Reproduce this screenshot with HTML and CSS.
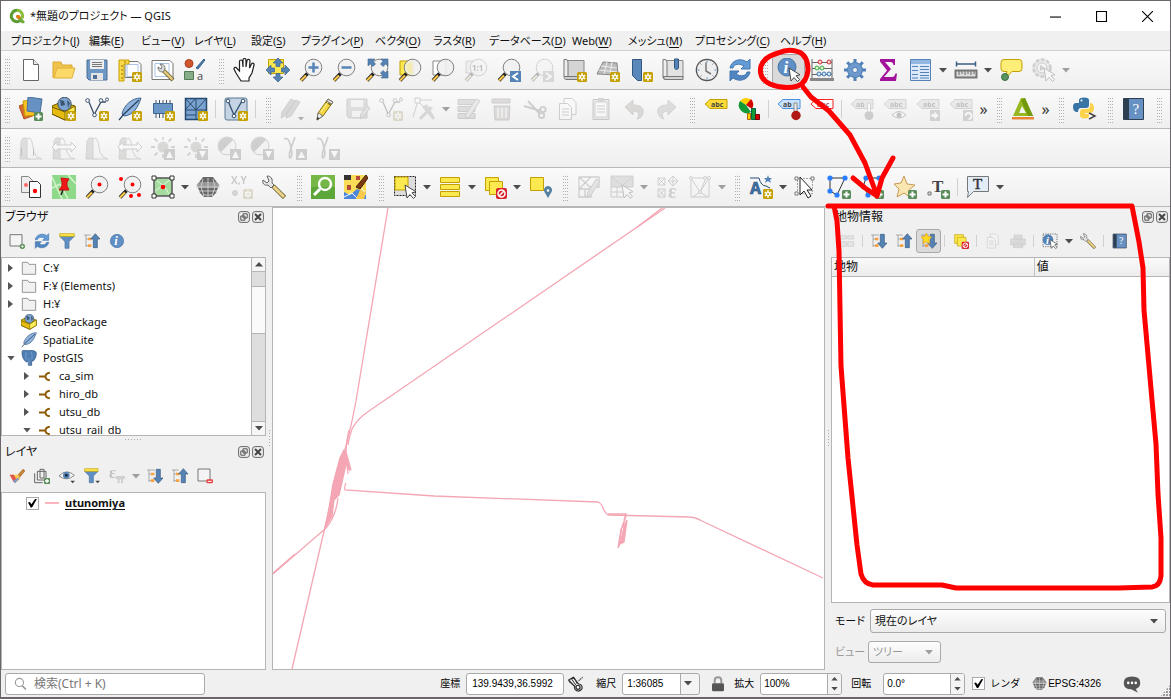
FILE: index.html
```html
<!DOCTYPE html>
<html lang="ja">
<head>
<meta charset="utf-8">
<title>*無題のプロジェクト — QGIS</title>
<link rel="stylesheet" href="styles.css">
</head>
<body>
<svg class="defs" aria-hidden="true">
<defs>
<g id="p-new"><rect x="14" y="14" width="10" height="10" rx="1.5" fill="#c4a000"/><path d="M19 15.3v7.4M15.8 17.2l6.4 3.6M22.2 17.2l-6.4 3.6" stroke="#fff" stroke-width="1.6"/><circle cx="19" cy="19" r="1" fill="#c4a000"/></g>
<g id="p-add"><rect x="15" y="15" width="9" height="9" rx="1.5" fill="#5a8c5a"/><path d="M19.500 16.500v6M16.500 19.500h6" stroke="#fff" stroke-width="2"/></g>
<g id="p-lens"><path d="M8.500 15.500l-6.500 7" stroke="#222" stroke-width="3.600"/><path d="M7 17.500l-5 5" stroke="#fcc94a" stroke-width="2.200"/><circle cx="14.500" cy="9.500" r="8.300" fill="#f0f0f0" fill-opacity=".88" stroke="#7e7e7e"/></g>
<g id="p-cursor"><path d="M12 10l2 13 3-3.500 3.500 4 2-2-3.500-3.700 4-1z" fill="#fff" stroke="#444"/></g>
<g id="p-hist"><path d="M1 23l1-18 2-3h4l4 7v14z" fill="#9fb096" stroke="#888"/><path d="M8 23V3l3-1 2 4 2 10 3 5 5 2z" fill="#f4f4f4" stroke="#888"/></g>
<g id="p-globe"><path d="M3 8h18M1 12h22M3 16h18M7 20h10M12 3v19M7 4l-2 8 3 9M17 4l2 8-3 9" stroke="#ddd" fill="none" stroke-width=".8"/></g>
<g id="p-tag"><path d="M1 7l5-4.500h17v9H6z"/></g>
</defs>
<symbol id="logo" viewBox="0 0 24 24"><path d="M12 3.500a8.500 8.500 0 1 0 6 14.500" fill="none" stroke="#5a9b34" stroke-width="4.500"/><path d="M12 3.500a8.500 8.500 0 0 1 7.600 12" fill="none" stroke="#8cbc3c" stroke-width="4.500"/><path d="M11 11h4l8 9v3h-4l-8-9z" fill="#6faa35"/><path d="M11 11h5l2 3-4 3-3-3z" fill="#ee7913"/></symbol>
<symbol id="newdoc" viewBox="0 0 24 24"><path d="M4.500 1.500h10l5 5v16h-15z" fill="#fff" stroke="#666"/><path d="M14.500 1.500v5h5" fill="#eee" stroke="#666"/></symbol>
<symbol id="open" viewBox="0 0 24 24"><path d="M1 20V4h8l1 3h10v4" fill="#f0c44c" stroke="#d9a72d"/><path d="M2 20l3-10h18l-3 10z" fill="#fcd867" stroke="#dfb13a"/></symbol>
<symbol id="save" viewBox="0 0 24 24"><path d="M2 2h20v20H4l-2-2z" fill="#6d97c4" stroke="#4d6f94"/><path d="M5 2h14v9H5z" fill="#eee"/><path d="M7 4.500h10M7 6.500h10M7 8.500h10" stroke="#777"/><path d="M6 15h12v7H6z" fill="#e4e4e4"/><path d="M8 17h4v4H8z" fill="#4d6f94"/></symbol>
<symbol id="layout" viewBox="0 0 24 24"><path d="M7 3.500h13l3 3v13H7z" fill="#fff" stroke="#777"/><path d="M9 6.500h11v12H9z" fill="none" stroke="#a9c4e6"/><path d="M1 2h10v4H6v17H1z" fill="#fcd94a" stroke="#c4a000"/><path d="M3 8h2M3 12h2M3 16h2M3 20h2M7 3v2" stroke="#8a7000"/><use href="#p-new"/></symbol>
<symbol id="layouts" viewBox="0 0 24 24"><path d="M1 2.500h18l3 3v16H1z" fill="#fff" stroke="#777"/><path d="M4 5.500h14v13H4z" fill="none" stroke="#a9c4e6"/><path d="M13 13l9 9" stroke="#665c30" stroke-width="4"/><path d="M13 13l8.500 8.500" stroke="#e2c878" stroke-width="2.500"/><path d="M9 6c3 0 5 1 5 5l-2 3c-4 0-5-2-5-5l3 2 1-2z" fill="#ddd" stroke="#777"/></symbol>
<symbol id="style" viewBox="0 0 24 24"><circle cx="5" cy="5.500" r="4" fill="#d0562e" stroke="#a84020"/><path d="M12 10l8-9 1 1-7 9z" fill="#4a78ac" stroke="#3c6490"/><path d="M.5 13.500h9v8h-9z" fill="#86ad86" stroke="#557a55"/><text x="13" y="22" font-family="Open Sans,sans-serif" font-size="11" fill="#444">a</text></symbol>
<symbol id="hand" viewBox="0 0 24 24"><path d="M8 23l-5-8-2-4c0-2 2-2 3-.5L6.500 13V3.500c0-2 2.800-2 3 0L10 9V2c0-2 3-2 3 0v7l1-6.500c.5-1.700 3-1.300 3 .500L16.500 10l2-4c1-1.500 3-.5 2.500 1l-2 8-3 5v3z" fill="#fff" stroke="#222" stroke-width="1.200"/></symbol>
<symbol id="panto" viewBox="0 0 24 24"><path d="M2.500 1.500h15v14h-15z" fill="#fce94f" stroke="#c4a000"/><path d="M12 0l5 5h-3v3.500h-4V5H7zM12 24l5-5h-3v-3.500h-4V19H7zM0 12l5-5v3h3.500v4H5v3zM24 12l-5-5v3h-3.500v4H19v3z" fill="#5583b5" stroke="#3c648e" stroke-width=".7"/></symbol>
<symbol id="zoomin" viewBox="0 0 24 24"><use href="#p-lens"/><path d="M14.500 4.500v10M9.500 9.500h10" stroke="#5583b5" stroke-width="2.500"/></symbol>
<symbol id="zoomout" viewBox="0 0 24 24"><use href="#p-lens"/><path d="M9.500 9.500h10" stroke="#5583b5" stroke-width="2.500"/></symbol>
<symbol id="zoomfull" viewBox="0 0 24 24"><use href="#p-lens"/><path d="M3 1h7L8 3.200 10.500 6 8 8.500 5.200 6 3 8zM23 1h-7l2 2.200L15.500 6 18 8.500 20.800 6 23 8zM23 20h-7l2-2.200L15.500 15l2.500-2.500 2.800 2.500L23 13z" fill="#5583b5" stroke="#3c648e" stroke-width=".6"/></symbol>
<symbol id="zoomsel" viewBox="0 0 24 24"><path d="M2 3h13v14H2z" fill="#fce94f" stroke="#c4a000"/><use href="#p-lens"/><path d="M9 5h5v11c-4-1-6-5-5-11z" fill="#f3ecae"/></symbol>
<symbol id="zoomlayer" viewBox="0 0 24 24"><path d="M2 3h13v14H2z" fill="#fff" stroke="#888"/><use href="#p-lens"/></symbol>
<symbol id="zoomone" viewBox="0 0 24 24"><path d="M2 3h12v12H2z" fill="#ddd" stroke="#888"/><use href="#p-lens"/><text x="8" y="13" font-family="Open Sans,sans-serif" font-weight="bold" font-size="8" fill="#444">1:1</text></symbol>
<symbol id="zoomlast" viewBox="0 0 24 24"><use href="#p-lens"/><path d="M13 13h11v11H13z" fill="#5583b5"/><path d="M21 15l-5 3.500 5 3.500" fill="none" stroke="#fff" stroke-width="2"/></symbol>
<symbol id="zoomnext" viewBox="0 0 24 24"><use href="#p-lens"/><path d="M13 13h11v11H13z" fill="#999"/><path d="M16 15l5 3.500-5 3.500" fill="none" stroke="#fff" stroke-width="2"/></symbol>
<symbol id="newmap" viewBox="0 0 24 24"><path d="M4 2.500h17v17H4z" fill="#d4d4d4" stroke="#888"/><path d="M1 1.500h2q2 0 2 3v17H3q-2 0-2-3z" fill="#eee" stroke="#777"/><path d="M1 18.500h14v3H3" fill="#ccc" stroke="#777"/><use href="#p-new"/></symbol>
<symbol id="new3d" viewBox="0 0 24 24"><path d="M7 4l14 1 1 12L1 16z" fill="#bbb" stroke="#888"/><path d="M5 8l16 2M3 12l18 2M11 4l-3 12M16 4l-2 12" stroke="#eee"/><use href="#p-new"/></symbol>
<symbol id="bookmark" viewBox="0 0 24 24"><path d="M3.500 1.500h9v21h-4l-5-5z" fill="#5a88bb" stroke="#315783"/><use href="#p-new"/></symbol>
<symbol id="bookmarks" viewBox="0 0 24 24"><path d="M4 2.500h17v17H4z" fill="#e2e2e2" stroke="#888"/><path d="M1 1.500h2q2 0 2 3v17H3q-2 0-2-3z" fill="#eee" stroke="#777"/><path d="M1 18.500h20v3H3z" fill="#d5d5d5" stroke="#777"/><path d="M12.500 1h4v9l-2 2-2-2z" fill="#5583b5" stroke="#315783"/></symbol>
<symbol id="clock" viewBox="0 0 24 24"><circle cx="12" cy="12" r="10.700" fill="#eee" stroke="#555" stroke-width="1.200"/><path d="M12 2.500v2M12 19.500v2M2.500 12h2M19.500 12h2M5.500 5.500l1 1M18.500 5.500l-1 1M5.500 18.500l1-1M18.500 18.500l-1-1" stroke="#5583b5"/><path d="M11 4.500V13l5 3" stroke="#777" stroke-width="1.500" fill="none"/></symbol>
<symbol id="refresh" viewBox="0 0 24 24"><path d="M2 10C3 3 12-1 19 4l3-3v10h-9l3-3C11 5 6 6 5 10z" fill="#629bd6" stroke="#4478b0"/><path d="M22 14c-1 7-10 11-17 6l-3 3V13h9l-3 3c5 3 10 2 11-2z" fill="#4f85c0" stroke="#4478b0"/></symbol>
<symbol id="identify" viewBox="0 0 24 24"><circle cx="10" cy="9" r="9" fill="#5f8fc4" stroke="#4a76a8"/><text x="6.500" y="15" font-family="Liberation Serif,serif" font-weight="bold" font-style="italic" font-size="17" fill="#fff">i</text><use href="#p-cursor"/></symbol>
<symbol id="abacus" viewBox="0 0 24 24"><path d="M2 1v20M22 1v20M2 4.500h20M2 10.500h20M2 16.500h20" stroke="#666"/><path d="M0 20h24v3H0z" fill="#888"/><g fill="#ffd0d0" stroke="#c33"><circle cx="10" cy="4" r="2"/><circle cx="19" cy="4" r="2"/></g><g fill="#d5f5d0" stroke="#4a4"><circle cx="7" cy="10" r="2"/><circle cx="12" cy="10" r="2"/></g><g fill="#cfe6f5" stroke="#47a"><circle cx="9" cy="16" r="2"/><circle cx="14" cy="16" r="2"/><circle cx="19" cy="16" r="2"/></g></symbol>
<symbol id="gear" viewBox="0 0 24 24"><path d="M12 1v22M1 12h22M4.200 4.200l15.600 15.600M19.800 4.200L4.200 19.800" stroke="#4f81b8" stroke-width="3"/><circle cx="12" cy="12" r="7.500" fill="#6d9acb" stroke="#4f81b8"/><circle cx="12" cy="12" r="2.500" fill="#f2f2f2" stroke="#4f81b8"/></symbol>
<symbol id="sigma" viewBox="0 0 24 24"><path d="M4 1h15v6h-1.500q-.5-3-3-3H9l6 7-7 8h8q2.500 0 3.500-3.500H21l-1 7.500H4v-2l7-8.500L4 3.500z" fill="#a3129b"/></symbol>
<symbol id="table" viewBox="0 0 24 24"><path d="M1.500 1.500h20v21h-20z" fill="#dbe9f8" stroke="#5583b5"/><path d="M2 2h19v4H2z" fill="#93b9e2"/><path d="M3 8.500h6M3 12.500h6M3 16.500h6M3 20h6M11 8.500h9M11 11.500h9M11 14.500h9M11 17.500h9M11 20h9" stroke="#5583b5"/></symbol>
<symbol id="ruler" viewBox="0 0 24 24"><path d="M2 6h20M2.500 3.500v5M21.500 3.500v5" stroke="#3b5f85" stroke-width="1.500"/><path d="M1.500 12.500h21v7h-21z" fill="#ddd" stroke="#777" stroke-width="2"/><path d="M5 13v4M8 13v3M11 13v4M14 13v3M17 13v4M20 13v3" stroke="#666"/></symbol>
<symbol id="tip" viewBox="0 0 24 24"><path d="M5 1.500h15q3 0 3 3v6q0 3-3 3h-7l-7 7 2-7H5q-3 0-3-3v-6q0-3 3-3z" fill="#fdee78" stroke="#c4a000"/><circle cx="6" cy="19" r="3.500" fill="#5a9460" stroke="#3e7045"/></symbol>
<symbol id="action" viewBox="0 0 24 24"><circle cx="10" cy="10" r="8.500" fill="#ccc" stroke="#777" stroke-width="2.500" stroke-dasharray="4 1.500"/><circle cx="10" cy="10" r="5" fill="#eee" stroke="#777"/><path d="M8 7l5 3-5 3z" fill="#777"/><use href="#p-cursor"/></symbol>
<symbol id="datasrc" viewBox="0 0 24 24"><path d="M0 9l11-4 5 13-11 4z" fill="#d66a33" stroke="#b64e1d"/><path d="M4 4l12-1 1 15-11 1z" fill="#fcc325" stroke="#c4a000"/><path d="M9 0l14 2-2 14-13-2z" fill="#6791c2" stroke="#47709c"/><use href="#p-add"/></symbol>
<symbol id="gpkg" viewBox="0 0 24 24"><path d="M0 9l9-4 14 4v8l-10 6L0 17z" fill="#d8ae00" stroke="#6e5800"/><circle cx="12.500" cy="7" r="6.700" fill="#7ba3cf" stroke="#456"/><path d="M8 3l4 1 1 4-4 1zM15 3l3 3-2 5" fill="#3c5670"/><path d="M0 10l13 5 10-6v8l-10 6L0 17z" fill="#e6bc10" stroke="#6e5800"/><path d="M13 15l10-6v8l-10 6z" fill="#fcee58" stroke="#8a7000"/></symbol>
<symbol id="newgpkg" viewBox="0 0 24 24"><use href="#gpkg"/><use href="#p-new"/></symbol>
<symbol id="vector" viewBox="0 0 24 24"><path d="M2 4l3-1M4 5l5 12M10 16l6-11h5" fill="none" stroke="#3a506b" stroke-width="1.300"/><g fill="#fff" stroke="#3a506b"><circle cx="2.500" cy="3.500" r="1.800"/><circle cx="9.500" cy="18" r="1.800"/><circle cx="16" cy="3.500" r="1.800"/><circle cx="22" cy="2.500" r="1.500"/></g><use href="#p-new"/></symbol>
<symbol id="feather" viewBox="0 0 24 24"><path d="M23 1C14 1 6 8 4 17l2 2C16 18 20 10 23 1z" fill="#8fb3dc" stroke="#3c648e"/><path d="M21 3L6 17l-5 6" fill="none" stroke="#2b4260" stroke-width="1.200"/></symbol>
<symbol id="newfeather" viewBox="0 0 24 24"><use href="#feather"/><use href="#p-new"/></symbol>
<symbol id="chip" viewBox="0 0 24 24"><path d="M5 3v18M8.500 3v18M12 3v18M15.500 3v18M19 3v18" stroke="#456"/><path d="M2.500 6.500h19v10h-19z" fill="#6b97c7" stroke="#3c648e"/><use href="#p-new"/></symbol>
<symbol id="mesh" viewBox="0 0 24 24"><path d="M1.500 1.500h21v21h-21z" fill="#7ba3d0" stroke="#264a70" stroke-width="1.500"/><path d="M1 13h22M12 1v22M1 1l11 12M12 1L1 13M23 1L12 13M1 18h11" stroke="#264a70"/><use href="#p-new"/></symbol>
<symbol id="virtual" viewBox="0 0 24 24"><rect x="1" y="1" width="22" height="22" rx="2" fill="#c4d4e4" stroke="#5a7896"/><path d="M4 4l6 14 8-14h3" fill="none" stroke="#34506e" stroke-width="1.300"/><g fill="#fff" stroke="#34506e"><circle cx="4" cy="4" r="1.800"/><circle cx="10" cy="19" r="1.800"/><circle cx="19" cy="4" r="1.800"/></g><use href="#p-new"/></symbol>
<symbol id="pencils" viewBox="0 0 24 24"><path d="M1 21l1-6L11 2l4 2-9 14zM6 21l1-6 9-12 4 2-9 14z" fill="#999" stroke="#777"/><path d="M18 20h6l-3 3.500z" fill="#111"/></symbol>
<symbol id="pencil" viewBox="0 0 24 24"><path d="M4 23l1-7L15 2l5 3L10 19z" fill="#f4d643" stroke="#877214"/><path d="M13 5l5 3" stroke="#877214" stroke-width="1.500"/><path d="M15 2l5 3-1.500 2-5-3z" fill="#ddd" stroke="#777"/><path d="M5 16l2 .5 1 1.500 2 1-6 4z" fill="#eee" stroke="#777"/><path d="M4 23l.5-3 2 1.200z" fill="#222"/><path d="M8 15l7-10" stroke="#fff6a5"/></symbol>
<symbol id="saveedit" viewBox="0 0 24 24"><path d="M1 2h20v19H3l-2-2z" fill="#aaa" stroke="#777"/><path d="M5 3h12v7H5zM6 14h10v6H6z" fill="#eee"/><path d="M14 22l1-5 6-8 3 2-6 8z" fill="#bbb" stroke="#777"/></symbol>
<symbol id="vertex" viewBox="0 0 24 24"><path d="M3 3h17M5 5v2L1 20M6 5l9 7" stroke="#777" fill="none"/><path d="M3 1h5v5H3z" fill="#fff" stroke="#777"/><path d="M7 21L18 9l3 2L9 23zM10 10l5-3 8 14-2 2z" fill="#999"/></symbol>
<symbol id="editattr" viewBox="0 0 24 24"><path d="M1 2.500h17v5H1zM1 9.500h17v5H1zM1 16.500h17v5H1z" fill="#a9ad9a" stroke="#777"/><path d="M8 22l1-5L19 2l4 2-10 15z" fill="#ccc" stroke="#777"/></symbol>
<symbol id="trash" viewBox="0 0 24 24"><path d="M2 2h18v4H2zM4 9h16l-1 14H5z" fill="#c09a9a" stroke="#856a6a"/><path d="M8 11v10M12 11v10M16 11v10" stroke="#eee" stroke-width="1.500"/></symbol>
<symbol id="cut" viewBox="0 0 24 24"><path d="M1 9l17 5M5 4l12 13" stroke="#777" stroke-width="2"/><circle cx="20" cy="12.500" r="2.700" fill="none" stroke="#777" stroke-width="1.800"/><circle cx="18.500" cy="18.500" r="2.700" fill="none" stroke="#777" stroke-width="1.800"/></symbol>
<symbol id="copy" viewBox="0 0 24 24"><path d="M8 1.500h8l4 4v12H8z" fill="#fff" stroke="#777"/><path d="M3.500 6.500h8l4 4v12h-12z" fill="#fff" stroke="#777"/><path d="M6 12h7M6 15h7M6 18h7" stroke="#777"/></symbol>
<symbol id="paste" viewBox="0 0 24 24"><path d="M4 2.500h16v20H4z" fill="#ccc" stroke="#666"/><path d="M6 5h12v15H6z" fill="#fff" stroke="#888"/><path d="M9 1h6v4H9z" fill="#888"/><path d="M8 9h8M8 12h8M8 15h8" stroke="#777"/></symbol>
<symbol id="undo" viewBox="0 0 24 24"><path d="M3 10l8-7v5c8 0 11 3 10 8-1 4-3 5-6 6 3-4 2-8-4-8v4z" fill="#a89a8c" stroke="#887b70"/></symbol>
<symbol id="redo" viewBox="0 0 24 24"><path d="M21 10l-8-7v5c-8 0-11 3-10 8 1 4 3 5 6 6-3-4-2-8 4-8v4z" fill="#9aaa9a" stroke="#778877"/></symbol>
<symbol id="label" viewBox="0 0 24 24"><use href="#p-tag" fill="#fddc3a" stroke="#c4a000"/><text x="7" y="10" font-family="Open Sans,sans-serif" font-weight="bold" font-size="7" fill="#444">abc</text></symbol>
<symbol id="diagram" viewBox="0 0 24 24"><path d="M9 8L3 4a7.500 7.500 0 0 1 11-1z" fill="#fcd000"/><path d="M9 8l5-6a8 8 0 0 1 1 10z" fill="#d40000"/><path d="M9 8l5 7A8 8 0 0 1 3 4z" fill="#129a35"/><path d="M10.500 16.500h3v6h-3z" fill="#fcd000" stroke="#a60"/><path d="M14.500 11.500h4v11h-4z" fill="#129a35" stroke="#064"/><path d="M18.500 17.500h4v5h-4z" fill="#d40000" stroke="#700"/></symbol>
<symbol id="pin" viewBox="0 0 24 24"><use href="#p-tag" fill="#c9e2fb" stroke="#4a90e2"/><text x="6" y="10" font-family="Open Sans,sans-serif" font-weight="bold" font-size="7" fill="#444">ab</text><path d="M17 6h3v9h-3z" fill="#eee" stroke="#888"/><circle cx="19" cy="18.500" r="4.700" fill="#b01818"/></symbol>
<symbol id="redtag" viewBox="0 0 24 24"><use href="#p-tag" fill="#fff" stroke="#f22"/><text x="7" y="10" font-family="Open Sans,sans-serif" font-weight="bold" font-size="7" fill="#a55">abc</text></symbol>
<symbol id="graypin" viewBox="0 0 24 24"><use href="#p-tag" fill="#ccc" stroke="#888"/><text x="6" y="10" font-family="Open Sans,sans-serif" font-weight="bold" font-size="7" fill="#444">ab</text><circle cx="19" cy="18.500" r="4.500" fill="#777"/><path d="M17.500 6h3v9h-3z" fill="#fff" stroke="#888"/></symbol>
<symbol id="eyetag" viewBox="0 0 24 24"><use href="#p-tag" fill="#ccc" stroke="#888"/><text x="7" y="10" font-family="Open Sans,sans-serif" font-weight="bold" font-size="7" fill="#444">abc</text><path d="M9 18q7-7 14 0-7 6-14 0z" fill="#fff" stroke="#555"/><circle cx="16" cy="18" r="2.500" fill="#555"/></symbol>
<symbol id="movetag" viewBox="0 0 24 24"><use href="#p-tag" fill="#ccc" stroke="#888"/><text x="7" y="10" font-family="Open Sans,sans-serif" font-weight="bold" font-size="7" fill="#444">abc</text><path d="M14 13h10v11H14z" fill="#888"/><path d="M15.500 17h3v-2.500l4 4-4 4V20h-3z" fill="#fff"/></symbol>
<symbol id="rottag" viewBox="0 0 24 24"><use href="#p-tag" fill="#ccc" stroke="#888"/><text x="7" y="10" font-family="Open Sans,sans-serif" font-weight="bold" font-size="7" fill="#444">abc</text><path d="M14 13h10v11H14z" fill="#888"/><path d="M16.500 19a3 3 0 1 1 3 3" fill="none" stroke="#fff" stroke-width="1.800"/></symbol>
<symbol id="grass" viewBox="0 0 24 24"><path d="M10 1h4l8 18H2zM11 9l-3 7h7z" fill="#96b820" fill-rule="evenodd"/><path d="M14 1l8 18h-5L10 3z" fill="#72980f"/><path d="M1 20h22v2.500H1z" fill="#e88234"/></symbol>
<symbol id="python" viewBox="0 0 24 24"><path d="M6 6V3q0-2.500 5-2.500t5 2.500v5q0 3-3 3H8q-3 0-3 4H3q-3-1-3-5t3-4h8" fill="#3874a4"/><circle cx="8.500" cy="3.500" r="1" fill="#fff"/><path d="M17 6h1q3 1 3 5t-3 5h-6v1h4v2q0 2.500-4 2.500T7 19v-4q0-3 3-3h4q3 0 3-4z" fill="#fcd34a"/><path d="M16 16l6 3-6 3" fill="#fff" stroke="#444" stroke-width="1.500"/></symbol>
<symbol id="help" viewBox="0 0 24 24"><path d="M1.500 1.500h20v21h-20z" fill="#6791c2" stroke="#2d3f52"/><path d="M2 2h5v20H2z" fill="#2c3e50"/><text x="10.500" y="17" font-family="Liberation Serif,serif" font-size="15" fill="#fff">?</text></symbol>
<symbol id="h1" viewBox="0 0 24 24"><use href="#p-hist"/><path d="M2.500 12v8M14.500 12v8" stroke="#b33"/></symbol>
<symbol id="h2" viewBox="0 0 24 24"><use href="#p-hist"/><path d="M0 11l5-5v3h14V6l5 5-5 5v-3H5v3z" fill="#fff" stroke="#777"/></symbol>
<symbol id="up" viewBox="0 0 24 24"><path d="M13 13h11v11H13z" fill="#777"/><path d="M18.500 15l3.500 7h-7z" fill="#fff"/></symbol>
<symbol id="down" viewBox="0 0 24 24"><path d="M13 13h11v11H13z" fill="#777"/><path d="M18.500 22l3.500-7h-7z" fill="#fff"/></symbol>
<symbol id="sun" viewBox="0 0 24 24"><circle cx="12" cy="11" r="5.500" fill="#9c9a80"/><path d="M12 1v3M0 11h4M20 11h4M3.500 2.500l3 3M20.500 2.500l-3 3M3.500 19.500l3-3M12 18v4" stroke="#8a8870" stroke-width="1.800"/></symbol>
<symbol id="contrast" viewBox="0 0 24 24"><circle cx="10" cy="10" r="9" fill="#eee" stroke="#777"/><path d="M4 16A8 8 0 0 1 16 4z" fill="#777"/></symbol>
<symbol id="gamma" viewBox="0 0 24 24"><path d="M1 3q5-3 7 9 3-8 4-11M8 12q-3 9-1 10 3-2 1-10" fill="none" stroke="#777" stroke-width="1.800"/></symbol>
<symbol id="copycoord" viewBox="0 0 24 24"><path d="M2.500 1.500h7l4 4v12h-11z" fill="#eee" stroke="#888"/><circle cx="7" cy="10" r="2" fill="#f66"/><path d="M10.500 6.500h8l3 3v13h-11z" fill="#fff" stroke="#333"/><circle cx="16" cy="16" r="2.200" fill="#f00"/></symbol>
<symbol id="mappin" viewBox="0 0 24 24"><path d="M0 0h24v24H0z" fill="#8fd98a"/><path d="M0 13l8-4 8 15M16 0l8 9M0 2l10 22" stroke="#d6f3cf" fill="none" stroke-width="1.500"/><path d="M9 3l8 1-2 3v4l2 4H7l3-4V7z" fill="#f01818" stroke="#c11"/><path d="M11 15l-2 5" stroke="#222" stroke-width="1.500"/></symbol>
<symbol id="lensdot" viewBox="0 0 24 24"><use href="#p-lens"/><circle cx="14.500" cy="9.500" r="2" fill="#f00"/></symbol>
<symbol id="lensdots" viewBox="0 0 24 24"><use href="#p-lens"/><g fill="#f00"><circle cx="14.500" cy="9.500" r="1.900"/><circle cx="3" cy="4" r="2"/><circle cx="13" cy="21" r="2"/><circle cx="21" cy="20" r="2"/></g></symbol>
<symbol id="extent" viewBox="0 0 24 24"><path d="M3 3h18v18H3z" fill="#a6dba0" stroke="#555" stroke-width="1.500"/><path d="M6 6l7 5 5 8M4 16l8-6 7-5" fill="none" stroke="#e3f7df"/><g fill="#fff" stroke="#333"><path d="M1 1h4v4H1zM19 1h4v4h-4zM1 19h4v4H1zM19 19h4v4h-4z"/></g><circle cx="12" cy="12" r="2.300" fill="#f00"/></symbol>
<symbol id="dome" viewBox="0 0 24 24"><path d="M7 2h10l6 8-3 8-4 4H8l-4-4-3-8z" fill="#686868"/><use href="#p-globe"/><path d="M0 10h24M0 12h24" stroke="#ccc"/></symbol>
<symbol id="xy" viewBox="0 0 24 24"><text x="2" y="9" font-family="Open Sans,sans-serif" font-weight="bold" font-size="10" fill="#666">X,Y</text><circle cx="6" cy="18" r="2.500" fill="#999" stroke="#777"/><use href="#p-new"/></symbol>
<symbol id="wrench" viewBox="0 0 24 24"><path d="M11 11l11.500 11.500" stroke="#665c30" stroke-width="4.500"/><path d="M11.500 11.500l10.500 10.500" stroke="#ecd58a" stroke-width="3"/><path d="M5 1c4 0 6 3 5 7l2 2-3 3-3-3C2 11 0 8 1 5l4 3 2-2z" fill="#e4e4e4" stroke="#666"/></symbol>
<symbol id="greenlens" viewBox="0 0 24 24"><path d="M0 0h24v24H0z" fill="#5da63a"/><path d="M0 0h24v12H0z" fill="#76b848"/><circle cx="14" cy="9" r="6" fill="none" stroke="#fff" stroke-width="2.400"/><path d="M9 14l-6 6" stroke="#fff" stroke-width="3"/></symbol>
<symbol id="osm" viewBox="0 0 24 24"><path d="M0 0h22v24H0z" fill="#fbdc58"/><path d="M0 0h7v5H0z" fill="#333"/><path d="M12 1h4v4h-4zM3 10h4v5H3z" fill="#b54a3a"/><path d="M0 17l6 3 7-6 9 4v6H0z" fill="#4a86dc"/><path d="M0 22l8-4 6 6M17 12l5 8" stroke="#fff" fill="none"/><path d="M12 24l4-9 6 3-2 6z" fill="#fbc94a"/><path d="M22 0l2 3-8 11-4-2z" fill="#7b3a12" stroke="#421c04"/></symbol>
<symbol id="select" viewBox="0 0 24 24"><path d="M1.500 1.500h21v19h-21z" fill="#ddd" stroke="#222" stroke-dasharray="2 1"/><path d="M2 2h13v13H2z" fill="#fce94f" stroke="#c4a000"/><use href="#p-cursor"/></symbol>
<symbol id="selform" viewBox="0 0 24 24"><path d="M2.500 2.500h19v5h-19zM2.500 9.500h19v5h-19zM2.500 16.500h19v5h-19z" fill="#fce94f" stroke="#c4a000"/></symbol>
<symbol id="desel" viewBox="0 0 24 24"><path d="M2.500 2.500h13v13h-13z" fill="#fce94f" stroke="#c4a000"/><path d="M6.500 6.500h13v13h-13z" fill="#fce94f" stroke="#c4a000"/><rect x="13" y="13" width="11" height="11" rx="2" fill="#d8232f"/><circle cx="18.500" cy="18.500" r="3.500" fill="none" stroke="#fff" stroke-width="1.500"/><path d="M16 21l5-5" stroke="#fff" stroke-width="1.500"/></symbol>
<symbol id="selloc" viewBox="0 0 24 24"><path d="M2.500 2.500h13v13h-13z" fill="#fce94f" stroke="#c4a000"/><path d="M20 23l-3.500-6a4 4 0 1 1 7 0z" fill="#55809f"/><circle cx="20" cy="15.500" r="1.300" fill="#fff"/></symbol>
<symbol id="meshedit" viewBox="0 0 24 24"><path d="M2 2h20v10H14v10H2zM2 2l12 11M14 2L2 14M2 14h12M8 14v8" fill="none" stroke="#777" stroke-width="1.300"/><path d="M10 22l1-5L19 4l4 2-9 14z" fill="#bbb" stroke="#777"/></symbol>
<symbol id="meshsel" viewBox="0 0 24 24"><path d="M1 1h22v11H1z" fill="#aaa" stroke="#777"/><path d="M1 12v10h12M1 17h12M7 12v10M1 1l11 10L23 1" fill="none" stroke="#777"/><use href="#p-cursor"/></symbol>
<symbol id="meshcalc" viewBox="0 0 24 24"><path d="M3 3h7v7H3zM3 3l7 7M10 3l-7 7M3 14h7v8H3zM3 14l7 8M10 14l-7 8M18 1l5 5-5 5-5-5zM13 6h10M18 1v10" fill="none" stroke="#777"/><text x="13" y="23" font-family="Liberation Serif,serif" font-weight="bold" font-size="20" fill="#777">ε</text></symbol>
<symbol id="meshmod" viewBox="0 0 24 24"><path d="M3 3h18M3 3v19h18V3L12 17 3 3M12 17L5 22M12 17l8 5M18 3l-6 14" fill="none" stroke="#777"/><g fill="#fff" stroke="#777"><circle cx="3" cy="3" r="1.500"/><circle cx="21" cy="3" r="1.500"/><circle cx="17" cy="3" r="1.500"/><circle cx="12" cy="17" r="1.500"/></g></symbol>
<symbol id="annot" viewBox="0 0 24 24"><text x="1" y="19" font-family="Open Sans,sans-serif" font-weight="bold" font-size="16" fill="#3f75ac" stroke="#264a70" stroke-width=".6">A</text><path d="M1 3h9q2 8 7 8l4 2" fill="none" stroke="#264a70"/><path d="M19 0l1 3h3l-2 2 1 3-3-2-3 2 1-3-2-2h3z" fill="#4f81b8"/><use href="#p-new"/></symbol>
<symbol id="modannot" viewBox="0 0 24 24"><path d="M3.500 3.500h15v15h-15z" fill="none" stroke="#555" stroke-dasharray="1 2"/><path d="M1 2h3v3H1zM17 2h3v3h-3zM1 17h3v3H1z" fill="#fff" stroke="#777"/><path d="M6 2v18l4-4 4 7 3-2-4-6h5z" fill="#fff" stroke="#222"/></symbol>
<symbol id="poly" viewBox="0 0 24 24"><path d="M3 3h15M3 3v13l7 4 8-17" fill="none" stroke="#333"/><g fill="#2a7fff"><circle cx="3" cy="3" r="2.600"/><circle cx="18" cy="3" r="2.600"/><circle cx="3" cy="16" r="2.600"/><circle cx="10" cy="20" r="2.600"/></g><use href="#p-add"/></symbol>
<symbol id="line" viewBox="0 0 24 24"><path d="M6 3L3 12l5 7M6 3h13" fill="none" stroke="#333"/><g fill="#2a7fff"><circle cx="6" cy="3" r="2.600"/><circle cx="19" cy="3" r="2.600"/><circle cx="3" cy="12" r="2"/><circle cx="8" cy="20" r="2.600"/></g><use href="#p-add"/></symbol>
<symbol id="marker" viewBox="0 0 24 24"><path d="M11 1l3 8 8 1-6 5 2 8-7-5-7 4 2-8-5-5 7-1z" fill="#fbe6b2" stroke="#c79b56"/><use href="#p-add"/></symbol>
<symbol id="textpt" viewBox="0 0 24 24"><path d="M2 17h3v3H2z" fill="#ddd" stroke="#777"/><text x="6" y="17" font-family="Liberation Serif,serif" font-weight="bold" font-size="17" fill="#444">T</text><use href="#p-add"/></symbol>
<symbol id="balloon" viewBox="0 0 24 24"><path d="M1.500 1.500h21v15h-15l-6 6 1-6h-1z" fill="#e3edf7" stroke="#777"/><text x="7" y="14" font-family="Liberation Serif,serif" font-size="15" fill="#333" stroke="#333" stroke-width=".5">T</text></symbol>
<symbol id="addlayer" viewBox="0 0 24 24"><path d="M1.500 2.500h18v17h-18z" fill="#f4f4f4" stroke="#777" stroke-width="1.500"/><circle cx="20" cy="20" r="4" fill="#5a8c5a"/><path d="M20 17.500v5M17.500 20h5" stroke="#fff"/></symbol>
<symbol id="filter" viewBox="0 0 24 24"><path d="M1 5h22l-8 8v10H9V13z" fill="#5f8fc4" stroke="#456f9c"/><path d="M1 1h22v4H1z" fill="#fce94f" stroke="#c4a000"/></symbol>
<symbol id="collapse" viewBox="0 0 24 24"><path d="M0 3h10M3 3v18M3 9h4M3 19h4" stroke="#888" fill="none"/><path d="M6 7h5v4H6zM6 17h5v4H6z" fill="#f9a03f"/><path d="M17 1l7 8h-4v13h-6V9h-4z" fill="#5583b5" stroke="#34587f"/></symbol>
<symbol id="expand" viewBox="0 0 24 24"><path d="M0 3h12M3 3v18M3 9h4M3 19h4" stroke="#888" fill="none"/><path d="M6 7h5v4H6zM6 17h5v4H6z" fill="#f9a03f"/><path d="M17 23l7-8h-4V2h-6v13h-4z" fill="#5583b5" stroke="#34587f"/></symbol>
<symbol id="expandnew" viewBox="0 0 24 24"><use href="#expand"/><path d="M8 0l2 5 6 1-4 4 1 6-5-3-5 3 1-6-4-4 6-1z" fill="#fcdb20" stroke="#e9a010"/></symbol>
<symbol id="info" viewBox="0 0 24 24"><circle cx="12" cy="12" r="10" fill="#5f8fc4" stroke="#4a76a8"/><text x="8" y="18" font-family="Liberation Serif,serif" font-weight="bold" font-style="italic" font-size="19" fill="#fff">i</text></symbol>
<symbol id="folder" viewBox="0 0 24 24"><path d="M2 3.500h8l2 3h10v15H2z" fill="#f1f1f1" stroke="#888" stroke-width="1.300"/></symbol>
<symbol id="elephant" viewBox="0 0 24 24"><path d="M2 1q5-1 9 0 4-1 8 0 5 1 4 6-1 6-4 9l-3 1v6h-5v-6l-3 1q-4-2-6-9-1-6 0-8z" fill="#4f7fb5" stroke="#2f5480"/><path d="M8 3q-2 6 0 12M15 3q3 5 1 11M12 12v10" stroke="#86a8cf" fill="none"/></symbol>
<symbol id="conn" viewBox="0 0 24 24"><path d="M0 12h12M20 5q-8 1-8 7t8 7" fill="none" stroke="#8f5902" stroke-width="3.500"/></symbol>
<symbol id="brush" viewBox="0 0 24 24"><path d="M13 11l8-9 3 2-8 10z" fill="#c78332" stroke="#a56a28"/><path d="M1 10h13l3 6-8 7z" fill="#fcc94a"/><path d="M1 10h6l4 7-4 4z" fill="#e0554e"/><path d="M6 20l8-6 1 3-6 6z" fill="#7a9ad0"/></symbol>
<symbol id="group" viewBox="0 0 24 24"><path d="M1 8v14h12M5 5v13h13V5zM9 2h6v13H9z" fill="none" stroke="#666" stroke-width="1.500"/><use href="#p-add"/></symbol>
<symbol id="eye" viewBox="0 0 24 24"><path d="M0 12Q11 0 23 11 12 21 0 12z" fill="#f5f5f5" stroke="#777" stroke-width="1.300"/><circle cx="11" cy="11" r="5" fill="#5583b5"/><circle cx="11" cy="11" r="2" fill="#123"/><path d="M17 19h7l-3.500 4z" fill="#444"/></symbol>
<symbol id="filterd" viewBox="0 0 24 24"><path d="M1 5h20l-7 7v10H8V12z" fill="#5f8fc4" stroke="#456f9c"/><path d="M1 1h20v4H1z" fill="#fce94f" stroke="#c4a000"/><path d="M17 19h7l-3.500 4z" fill="#444"/></symbol>
<symbol id="expr" viewBox="0 0 24 24"><text x="0" y="15" font-family="Liberation Serif,serif" font-weight="bold" font-size="24" fill="#555">ε</text><path d="M10 12h14v4l-3 1v6h-3v-6h-2v6h-3v-6l-3-1z" fill="#888"/></symbol>
<symbol id="removelayer" viewBox="0 0 24 24"><path d="M1.500 1.500h18v18h-18z" fill="#f4f4f4" stroke="#777" stroke-width="1.500"/><rect x="14" y="17" width="10" height="6" rx="2" fill="#e8413f"/><path d="M16 20h6" stroke="#fff" stroke-width="1.500"/></symbol>
<symbol id="form" viewBox="0 0 24 24"><path d="M2 4h9v5H2zM13 4h9v5h-9zM2 13h9v7H2zM13 13h9v7h-9z" fill="#ccc" stroke="#777"/></symbol>
<symbol id="printer" viewBox="0 0 24 24"><path d="M6 3h12v6H6zM1 9h22v9H1zM5 15h14v7H5z" fill="#aaa" stroke="#777"/></symbol>
<symbol id="idmode" viewBox="0 0 24 24"><path d="M1.500 1.500h21v19h-21z" fill="none" stroke="#444" stroke-dasharray="2 1.500"/><circle cx="9" cy="10" r="8" fill="#5583b5"/><text x="6" y="16" font-family="Liberation Serif,serif" font-weight="bold" font-style="italic" font-size="16" fill="#fff">i</text><use href="#p-cursor"/></symbol>
<symbol id="mouse" viewBox="0 0 24 24"><path d="M1 6l7-4 8 10q6 1 5 7-3 5-8 3-4-2-3-6z" fill="#eee" stroke="#333" stroke-width="1.800"/><path d="M5 4l7 10M1 8l10 8M9 2l5 10" stroke="#333" stroke-width="1.500"/><circle cx="15" cy="17" r="3" fill="#fff" stroke="#333" stroke-width="2"/><path d="M16 7l6-5" stroke="#555" stroke-dasharray="2 1" stroke-width="2"/></symbol>
<symbol id="lock" viewBox="0 0 24 24"><path d="M7 11V7q0-5 5-5t5 5v4" fill="none" stroke="#999" stroke-width="3"/><rect x="3" y="11" width="18" height="12" rx="2" fill="#555"/></symbol>
<symbol id="speech" viewBox="0 0 24 24"><path d="M12 2q11 0 11 8.500 0 6-6 8l3 5-9-4.500Q1 19 1 10.500T12 2z" fill="#555"/><g fill="#fff"><circle cx="7" cy="10.500" r="1.700"/><circle cx="12" cy="10.500" r="1.700"/><circle cx="17" cy="10.500" r="1.700"/></g></symbol>
<symbol id="search" viewBox="0 0 24 24"><circle cx="10" cy="10" r="7.500" fill="none" stroke="#999" stroke-width="2"/><path d="M15 16l7 7" stroke="#999" stroke-width="3"/></symbol>
<symbol id="float" viewBox="0 0 12 12"><rect x=".6" y=".6" width="10.800" height="10.800" rx="2.500" fill="#eee" stroke="#666"/><path d="M5 2.800h4.200V7H5zM2.800 5H7v4.200H2.800z" fill="#eee" stroke="#555"/></symbol>
<symbol id="close" viewBox="0 0 12 12"><rect x=".6" y=".6" width="10.800" height="10.800" rx="2.500" fill="#eee" stroke="#666"/><path d="M3 3l6 6M9 3L3 9" stroke="#444" stroke-width="2"/></symbol>
<symbol id="arr" viewBox="0 0 8 5"><path d="M0 0h8L4 4.500z" fill="#4c4c4c"/></symbol>
<symbol id="arru" viewBox="0 0 8 5"><path d="M0 4.500h8L4 0z" fill="#4c4c4c"/></symbol>
</svg>

<div class="window">
<header class="title">
<svg class="logo"><use href="#logo"/></svg><h1>*無題のプロジェクト — QGIS</h1>
<button aria-label="最小化"><svg viewBox="0 0 10 10"><path d="M0 5.500h10" stroke="#000"/></svg></button>
<button aria-label="最大化"><svg viewBox="0 0 10 10"><path d="M.5 .5h9v9h-9z" fill="none" stroke="#000"/></svg></button>
<button aria-label="閉じる"><svg viewBox="0 0 10 10"><path d="M0 0l10 10M10 0L0 10" stroke="#000"/></svg></button>
</header>
<nav class="menu">
<button>プロジェクト(<u>J</u>)</button><button>編集(<u>E</u>)</button><button>ビュー(<u>V</u>)</button><button>レイヤ(<u>L</u>)</button><button>設定(<u>S</u>)</button><button>プラグイン(<u>P</u>)</button><button>ベクタ(<u>O</u>)</button><button>ラスタ(<u>R</u>)</button><button>データベース(<u>D</u>)</button><button>Web(<u>W</u>)</button><button>メッシュ(<u>M</u>)</button><button>プロセシング(<u>C</u>)</button><button>ヘルプ(<u>H</u>)</button>
</nav>

<div class="bar" role="toolbar" aria-label="プロジェクト">
<i class="grip first"></i>
<button class="tb" aria-label="新規"><svg><use href="#newdoc"/></svg></button>
<button class="tb" aria-label="開く"><svg><use href="#open"/></svg></button>
<button class="tb" aria-label="保存"><svg><use href="#save"/></svg></button>
<button class="tb" aria-label="新規レイアウト"><svg><use href="#layout"/></svg></button>
<button class="tb" aria-label="レイアウトマネージャ"><svg><use href="#layouts"/></svg></button>
<button class="tb" aria-label="スタイルマネージャ"><svg><use href="#style"/></svg></button>
<i class="grip"></i>
<button class="tb" aria-label="地図移動"><svg><use href="#hand"/></svg></button>
<button class="tb" aria-label="選択部分に移動"><svg><use href="#panto"/></svg></button>
<button class="tb" aria-label="拡大"><svg><use href="#zoomin"/></svg></button>
<button class="tb" aria-label="縮小"><svg><use href="#zoomout"/></svg></button>
<button class="tb" aria-label="全域表示"><svg><use href="#zoomfull"/></svg></button>
<button class="tb" aria-label="選択部分にズーム"><svg><use href="#zoomsel"/></svg></button>
<button class="tb" aria-label="レイヤにズーム"><svg><use href="#zoomlayer"/></svg></button>
<button class="tb" disabled aria-label="等倍"><svg><use href="#zoomone"/></svg></button>
<button class="tb" aria-label="前の表示"><svg><use href="#zoomlast"/></svg></button>
<button class="tb" disabled aria-label="次の表示"><svg><use href="#zoomnext"/></svg></button>
<button class="tb" aria-label="新規地図ビュー"><svg><use href="#newmap"/></svg></button>
<button class="tb" aria-label="新規3Dビュー"><svg><use href="#new3d"/></svg></button>
<button class="tb" aria-label="新規ブックマーク"><svg><use href="#bookmark"/></svg></button>
<button class="tb" aria-label="ブックマーク"><svg><use href="#bookmarks"/></svg></button>
<button class="tb" aria-label="時系列"><svg><use href="#clock"/></svg></button>
<button class="tb" aria-label="再読み込み"><svg><use href="#refresh"/></svg></button>
<i class="grip"></i>
<button class="tb on" aria-label="地物情報表示"><svg><use href="#identify"/></svg></button>
<button class="tb" aria-label="フィールド計算機"><svg><use href="#abacus"/></svg></button>
<button class="tb" aria-label="ツールボックス"><svg><use href="#gear"/></svg></button>
<button class="tb" aria-label="統計"><svg><use href="#sigma"/></svg></button>
<button class="tb" aria-label="属性テーブル"><svg><use href="#table"/></svg></button>
<button class="dd" aria-label="テーブルメニュー"><svg><use href="#arr"/></svg></button>
<button class="tb" aria-label="計測"><svg><use href="#ruler"/></svg></button>
<button class="dd" aria-label="計測メニュー"><svg><use href="#arr"/></svg></button>
<button class="tb" aria-label="マップチップス"><svg><use href="#tip"/></svg></button>
<button class="tb" disabled aria-label="アクション"><svg><use href="#action"/></svg></button>
<button class="dd" disabled aria-label="アクションメニュー"><svg><use href="#arr"/></svg></button>
</div>

<div class="bar" role="toolbar" aria-label="データソース">
<i class="grip first"></i>
<button class="tb" aria-label="データソース"><svg><use href="#datasrc"/></svg></button>
<button class="tb" aria-label="新規GeoPackage"><svg><use href="#newgpkg"/></svg></button>
<button class="tb" aria-label="新規シェープファイル"><svg><use href="#vector"/></svg></button>
<button class="tb" aria-label="新規SpatiaLite"><svg><use href="#newfeather"/></svg></button>
<button class="tb" aria-label="新規一時レイヤ"><svg><use href="#chip"/></svg></button>
<button class="tb" aria-label="新規メッシュ"><svg><use href="#mesh"/></svg></button>
<i class="sep"></i>
<button class="tb" aria-label="仮想レイヤ"><svg><use href="#virtual"/></svg></button>
<i class="sep"></i>
<i class="grip"></i>
<button class="tb" disabled aria-label="現在の編集"><svg><use href="#pencils"/></svg></button>
<button class="tb" aria-label="編集モード切替"><svg><use href="#pencil"/></svg></button>
<button class="tb" disabled aria-label="編集内容を保存"><svg><use href="#saveedit"/></svg></button>
<button class="tb" disabled aria-label="地物を追加"><svg><use href="#vector"/></svg></button>
<button class="tb" disabled aria-label="頂点ツール"><svg><use href="#vertex"/></svg></button>
<button class="dd" disabled aria-label="頂点ツールメニュー"><svg><use href="#arr"/></svg></button>
<button class="tb" disabled aria-label="属性を変更"><svg><use href="#editattr"/></svg></button>
<button class="tb" disabled aria-label="選択物の削除"><svg><use href="#trash"/></svg></button>
<button class="tb" disabled aria-label="切り取り"><svg><use href="#cut"/></svg></button>
<button class="tb" disabled aria-label="コピー"><svg><use href="#copy"/></svg></button>
<button class="tb" disabled aria-label="貼り付け"><svg><use href="#paste"/></svg></button>
<button class="tb" disabled aria-label="元に戻す"><svg><use href="#undo"/></svg></button>
<button class="tb" disabled aria-label="やり直す"><svg><use href="#redo"/></svg></button>
<i class="grip"></i>
<button class="tb" aria-label="ラベル"><svg><use href="#label"/></svg></button>
<button class="tb" aria-label="ダイアグラム"><svg><use href="#diagram"/></svg></button>
<i class="sep"></i>
<button class="tb" aria-label="固定ラベル"><svg><use href="#pin"/></svg></button>
<button class="tb" aria-label="未配置ラベル"><svg><use href="#redtag"/></svg></button>
<i class="sep"></i>
<button class="tb" disabled aria-label="ラベルの固定"><svg><use href="#graypin"/></svg></button>
<button class="tb" disabled aria-label="ラベルの表示"><svg><use href="#eyetag"/></svg></button>
<button class="tb" disabled aria-label="ラベルの移動"><svg><use href="#movetag"/></svg></button>
<button class="tb" disabled aria-label="ラベルの回転"><svg><use href="#rottag"/></svg></button>
<button class="more">»</button>
<i class="grip"></i>
<button class="tb" aria-label="GRASS"><svg><use href="#grass"/></svg></button>
<button class="more">»</button>
<i class="grip"></i>
<button class="tb" aria-label="Pythonコンソール"><svg><use href="#python"/></svg></button>
<i class="grip"></i>
<button class="tb" aria-label="ヘルプ"><svg><use href="#help"/></svg></button>
<i class="grip"></i>
</div>

<div class="bar" role="toolbar" aria-label="ラスタ">
<i class="grip first"></i>
<button class="tb" disabled aria-label="局所累積カットストレッチ"><svg><use href="#h1"/></svg></button>
<button class="tb" disabled aria-label="全体累積カットストレッチ"><svg><use href="#h2"/></svg></button>
<button class="tb" disabled aria-label="局所ヒストグラムストレッチ"><svg><use href="#p-hist"/></svg></button>
<button class="tb" disabled aria-label="全体ヒストグラムストレッチ"><svg><use href="#h2"/></svg></button>
<button class="tb" disabled aria-label="明るく"><svg><use href="#sun"/><use href="#up"/></svg></button>
<button class="tb" disabled aria-label="暗く"><svg><use href="#sun"/><use href="#down"/></svg></button>
<button class="tb" disabled aria-label="コントラストを上げる"><svg><use href="#contrast"/><use href="#up"/></svg></button>
<button class="tb" disabled aria-label="コントラストを下げる"><svg><use href="#contrast"/><use href="#down"/></svg></button>
<button class="tb" disabled aria-label="ガンマを上げる"><svg><use href="#gamma"/><use href="#up"/></svg></button>
<button class="tb" disabled aria-label="ガンマを下げる"><svg><use href="#gamma"/><use href="#down"/></svg></button>
</div>

<div class="bar" role="toolbar" aria-label="プラグイン">
<i class="grip first"></i>
<button class="tb" aria-label="座標をコピー"><svg><use href="#copycoord"/></svg></button>
<button class="tb" aria-label="外部地図で表示"><svg><use href="#mappin"/></svg></button>
<button class="tb" aria-label="座標にズーム"><svg><use href="#lensdot"/></svg></button>
<button class="tb" aria-label="複数座標にズーム"><svg><use href="#lensdots"/></svg></button>
<button class="tb" aria-label="範囲をコピー"><svg><use href="#extent"/></svg></button>
<button class="dd" aria-label="範囲メニュー"><svg><use href="#arr"/></svg></button>
<button class="tb" aria-label="座標変換"><svg><use href="#dome"/></svg></button>
<button class="tb" disabled aria-label="座標を追加"><svg><use href="#xy"/></svg></button>
<button class="tb" aria-label="設定"><svg><use href="#wrench"/></svg></button>
<i class="grip"></i>
<button class="tb" aria-label="検索"><svg><use href="#greenlens"/></svg></button>
<button class="tb" aria-label="地図ダウンロード"><svg><use href="#osm"/></svg></button>
<i class="grip"></i>
<button class="tb" aria-label="地物を選択"><svg><use href="#select"/></svg></button>
<button class="dd" aria-label="選択メニュー"><svg><use href="#arr"/></svg></button>
<button class="tb" aria-label="値で選択"><svg><use href="#selform"/></svg></button>
<button class="dd" aria-label="値で選択メニュー"><svg><use href="#arr"/></svg></button>
<button class="tb" aria-label="選択解除"><svg><use href="#desel"/></svg></button>
<button class="dd" aria-label="選択解除メニュー"><svg><use href="#arr"/></svg></button>
<button class="tb" aria-label="場所による選択"><svg><use href="#selloc"/></svg></button>
<i class="grip"></i>
<button class="tb" disabled aria-label="メッシュ編集"><svg><use href="#meshedit"/></svg></button>
<button class="tb" disabled aria-label="メッシュ選択"><svg><use href="#meshsel"/></svg></button>
<button class="dd" disabled aria-label="メッシュ選択メニュー"><svg><use href="#arr"/></svg></button>
<button class="tb" disabled aria-label="メッシュ変換"><svg><use href="#meshcalc"/></svg></button>
<button class="tb" disabled aria-label="メッシュ変更"><svg><use href="#meshmod"/></svg></button>
<button class="dd" disabled aria-label="メッシュ変更メニュー"><svg><use href="#arr"/></svg></button>
<i class="grip"></i>
<button class="tb" aria-label="新規注記レイヤ"><svg><use href="#annot"/></svg></button>
<button class="dd" aria-label="注記メニュー"><svg><use href="#arr"/></svg></button>
<button class="tb" aria-label="注記の変更"><svg><use href="#modannot"/></svg></button>
<button class="tb" aria-label="ポリゴン注記"><svg><use href="#poly"/></svg></button>
<button class="tb" aria-label="ライン注記"><svg><use href="#line"/></svg></button>
<button class="tb" aria-label="マーカー注記"><svg><use href="#marker"/></svg></button>
<button class="tb" aria-label="テキスト注記"><svg><use href="#textpt"/></svg></button>
<i class="sep"></i>
<button class="tb" aria-label="吹き出し注記"><svg><use href="#balloon"/></svg></button>
<button class="dd" aria-label="吹き出しメニュー"><svg><use href="#arr"/></svg></button>
</div>

<main>
<aside class="left">
<section class="dock browser">
<header><h2>ブラウザ</h2><button aria-label="分離"><svg><use href="#float"/></svg></button><button aria-label="閉じる"><svg><use href="#close"/></svg></button></header>
<div class="tools">
<button aria-label="選択レイヤを追加"><svg><use href="#addlayer"/></svg></button><button aria-label="更新"><svg><use href="#refresh"/></svg></button><button aria-label="フィルタ"><svg><use href="#filter"/></svg></button><button aria-label="すべて折りたたむ"><svg><use href="#collapse"/></svg></button><button aria-label="プロパティ"><svg><use href="#info"/></svg></button>
</div>
<div class="box treebox">
<ul class="tree">
<li><b></b><svg><use href="#folder"/></svg>C:¥</li>
<li><b></b><svg><use href="#folder"/></svg>F:¥ (Elements)</li>
<li><b></b><svg><use href="#folder"/></svg>H:¥</li>
<li><b class="leaf"></b><svg><use href="#gpkg"/></svg>GeoPackage</li>
<li><b class="leaf"></b><svg><use href="#feather"/></svg>SpatiaLite</li>
<li><b class="open"></b><svg><use href="#elephant"/></svg>PostGIS</li>
<li class="sub"><b></b><svg><use href="#conn"/></svg>ca_sim</li>
<li class="sub"><b></b><svg><use href="#conn"/></svg>hiro_db</li>
<li class="sub"><b></b><svg><use href="#conn"/></svg>utsu_db</li>
<li class="sub"><b class="open"></b><svg><use href="#conn"/></svg>utsu_rail_db</li>
</ul>
<div class="scroll"><button aria-label="上へ"><svg><use href="#arru"/></svg></button><span class="track"><span class="thumb"></span></span><button aria-label="下へ"><svg><use href="#arr"/></svg></button></div>
</div>
</section>
<div class="hsplit"></div>
<section class="dock layers">
<header><h2>レイヤ</h2><button aria-label="分離"><svg><use href="#float"/></svg></button><button aria-label="閉じる"><svg><use href="#close"/></svg></button></header>
<div class="tools">
<button aria-label="スタイル"><svg><use href="#brush"/></svg></button><button aria-label="グループ追加"><svg><use href="#group"/></svg></button><button aria-label="地図テーマ"><svg><use href="#eye"/></svg></button><button aria-label="凡例フィルタ"><svg><use href="#filterd"/></svg></button><button disabled aria-label="式でフィルタ"><svg><use href="#expr"/></svg></button><button class="dd narrow" disabled aria-label="式メニュー"><svg><use href="#arr"/></svg></button><button aria-label="すべて展開"><svg><use href="#expand"/></svg></button><button aria-label="すべて折りたたむ"><svg><use href="#collapse"/></svg></button><button aria-label="レイヤを削除"><svg><use href="#removelayer"/></svg></button>
</div>
<div class="box">
<label class="layer"><input type="checkbox" checked><i></i><span>utunomiya</span></label>
</div>
</section>
</aside>
<div class="vsplit"></div>
<section class="map" aria-label="地図">
<svg viewBox="273 208 551 461" preserveAspectRatio="xMinYMin slice" fill="none" stroke="#f4a6b4" stroke-width="1.300">
<path d="M388 208L356 401q-4 22-9 41l-22 85L292 669"/>
<path d="M665 208L369 411q-12 8-17 18-3 8-4 16"/>
<path d="M662 208l-26 20M273 574l53-46q10-12 12-30M273 573l22-19"/>
<path d="M349 430q-3 14-3 22l5 18M346 455l2 19M346 483q-2 4-1 7l89 6 164 6q3 1 5 6 3 7 6 7l80 2q6 0 13 4l121 57"/>
<path d="M608 514h18l-2 6"/>
<path d="M344 450l3 10-5 22-3 13-5 5-2 16-7 12 4-20 4-24 7-26z" fill="#f4a6b4"/>
<path d="M345 450l5 21-4-8M626 516l-4 11-3 19M627 520l-3 22-4 2-2 4 3-19 4-5z" fill="#f4a6b4"/>
</svg>
</section>
<div class="vsplit"></div>
<aside class="right">
<section class="dock">
<header><h2>地物情報</h2><button aria-label="分離"><svg><use href="#float"/></svg></button><button aria-label="閉じる"><svg><use href="#close"/></svg></button></header>
<div class="tools idtools">
<button disabled aria-label="フォーム"><svg><use href="#form"/></svg></button><i class="sep"></i><button aria-label="展開"><svg><use href="#expand"/></svg></button><button aria-label="折りたたむ"><svg><use href="#collapse"/></svg></button><button class="on" aria-label="新しい結果を展開"><svg><use href="#expandnew"/></svg></button><i class="sep"></i><button aria-label="結果をクリア"><svg><use href="#desel"/></svg></button><i class="sep"></i><button disabled aria-label="コピー"><svg><use href="#copy"/></svg></button><button disabled aria-label="印刷"><svg><use href="#printer"/></svg></button><i class="sep"></i><button aria-label="識別モード"><svg><use href="#idmode"/></svg></button><button class="dd narrow" aria-label="識別メニュー"><svg><use href="#arr"/></svg></button><button aria-label="設定"><svg><use href="#wrench"/></svg></button><i class="sep"></i><button aria-label="ヘルプ"><svg><use href="#help"/></svg></button>
</div>
<div class="box"><table><thead><tr><th>地物</th><th>値</th></tr></thead></table></div>
<div class="field mode"><label for="mode">モード</label><span class="combo"><select id="mode"><option>現在のレイヤ</option></select><svg><use href="#arr"/></svg></span></div>
<div class="field view"><label for="view">ビュー</label><span class="combo"><select id="view" disabled><option>ツリー</option></select><svg><use href="#arr"/></svg></span></div>
</section>
</aside>
</main>

<footer>
<span class="find"><svg><use href="#search"/></svg><input type="text" aria-label="検索" placeholder="検索(Ctrl + K)"></span>
<div class="status">
<label for="xy-in">座標</label><input id="xy-in" class="coord" type="text" value="139.9439,36.5992">
<button class="ico" aria-label="マウス位置"><svg><use href="#mouse"/></svg></button>
<label for="scale">縮尺</label><span class="combo scale"><select id="scale"><option>1:36085</option></select><svg><use href="#arr"/></svg></span>
<button class="ico" aria-label="縮尺を固定"><svg><use href="#lock"/></svg></button>
<label for="mag">拡大</label><span class="spin"><input id="mag" type="text" value="100%"><span><button aria-label="増やす"><svg><use href="#arru"/></svg></button><button aria-label="減らす"><svg><use href="#arr"/></svg></button></span></span>
<label for="rot" class="rot">回転</label><span class="spin"><input id="rot" type="text" value="0.0°"><span><button aria-label="増やす"><svg><use href="#arru"/></svg></button><button aria-label="減らす"><svg><use href="#arr"/></svg></button></span></span>
<label class="render"><input type="checkbox" checked>レンダ</label>
<button class="crs"><svg><use href="#dome"/></svg>EPSG:4326</button>
<button class="ico msg" aria-label="メッセージ"><svg><use href="#speech"/></svg></button>
</div>
<i class="size"></i>
</footer>
</div>

<svg class="ink" viewBox="0 0 1171 699" aria-hidden="true" fill="none" stroke="#f00" stroke-width="5" stroke-linecap="round" stroke-linejoin="round">
<path d="M778 53q-14 4-17 13-3 12 9 18 14 6 28 2 9-4 10-16 0-14-9-18-10-4-21 1"/>
<path d="M803 87l8 10 18 14 21 24 15 28 11 30M853 178l12 10 12 8 5-18 11-20"/>
<path d="M828 206h304l7 36 4 26 1 42 8 90 4 44 2 50 3 44v38q-1 10-9 11l-34 1H956l-14-3H873q-9-1-12-11l-4-29-9-87-7-92-2-115-2-30-3-15"/>
</svg>
</body>
</html>
```
FILE: styles.css
```css
* { box-sizing: border-box; }
html, body { height: 100%; margin: 0; }
body {
  font: 12px/18px "Noto Sans", "Noto Sans CJK JP", sans-serif;
  font-feature-settings: "palt";
  color: #111;
  background: #6c656a;
  overflow: hidden;
}
button, input, select { font: inherit; font-feature-settings: inherit; color: inherit; margin: 0; padding: 0; border: 0; background: none; }
button { display: flex; align-items: center; justify-content: center; }
h1, h2 { margin: 0; font: inherit; }
ul { margin: 0; padding: 0; list-style: none; }
svg { display: block; flex: none; }
.defs { display: none; }
.ink { position: absolute; top: 0; left: 0; width: 1171px; height: 699px; pointer-events: none; }

.window { height: 100%; padding: 1px 1px 2px; display: flex; flex-direction: column; }
.title { height: 30px; background: #fff; display: flex; align-items: center; padding-left: 8px; }
.title h1 { flex: 1; padding-left: 5px; font-size: 11px; }
.logo { width: 16px; height: 16px; }
.title button { width: 46px; height: 30px; }
.title button svg { width: 11px; height: 11px; }
.menu {
  height: 20px; background: #f0f0f0; border-bottom: 1px solid #d0d0d0; padding-left: 10px;
  display: grid; grid-template-columns: 78px 52px 53px 57px 50px 74px 58px 56px 83px 56px 67px 85px 60px;
}
.menu button { justify-content: flex-start; white-space: nowrap; font-size: 11px; }
.menu u { text-underline-offset: 2px; }

.bar { height: 39px; display: flex; align-items: center; background: linear-gradient(#fafafa, #efefef); border-bottom: 1px solid #b8b8b8; }
.tb { width: 33px; height: 33px; }
.tb svg { width: 24px; height: 24px; }
.dd { width: 12px; height: 33px; }
.dd svg { width: 8px; height: 5px; }
button:disabled svg { filter: grayscale(.7); opacity: .3; }
button.dd:disabled svg { opacity: .5; }
.on { background: #dadada; border: 1px solid #a8a8a8; border-radius: 3px; }
.more { width: 13px; font-size: 16px; color: #333; }
.grip { width: 16px; height: 27px; padding: 0 4px 0 7px; flex: none; }
.grip.first { width: 13px; padding-left: 4px; }
.grip::before { content: ""; display: block; height: 100%; background: conic-gradient(#b4b4b4 25%, transparent 0) -1px 1px / 2px 2px, #f5f5f5; background: linear-gradient(#f5f5f5 2px, transparent 2px) 0 0 / 3px 3px, linear-gradient(90deg, #b0b0b0 1px, transparent 1px) 0 0 / 2px 3px; }
.sep { width: 7px; height: 18px; border-left: 1px solid #d0d0d0; margin-left: 3px; margin-right: -3px; flex: none; }

main { flex: 1; min-height: 0; display: flex; background: #f0f0f0; }
.left { width: 265px; display: flex; flex-direction: column; }
.right { width: 339px; display: flex; flex-direction: column; }
.vsplit { width: 6px; display: flex; align-items: center; justify-content: center; }
.vsplit::before { content: ""; width: 1px; height: 17px; background: repeating-linear-gradient(#aaa 0 1px, transparent 1px 3px); }
.map { flex: 1; min-width: 0; background: #fff; border: 1px solid #b5b5b5; }
.map svg { width: 100%; height: 100%; }
.dock { display: flex; flex-direction: column; min-height: 0; }
.browser { flex: 229 1 0; }
.layers { flex: 228 1 0; }
.right .dock { flex: 1; }
.dock header { height: 19px; display: flex; align-items: center; gap: 2px; padding: 0 2px 0 4px; }
.dock h2 { flex: 1; font-size: 12px; }
.right h2 { font-feature-settings: normal; }
.dock header button svg { width: 12px; height: 12px; }
.tools { height: 31px; display: flex; align-items: center; padding: 0 0 1px 3px; }
.tools button { width: 25px; height: 24px; }
.tools button svg { width: 16px; height: 16px; }
.tools .narrow { width: 13px; }
.tools .narrow svg { width: 8px; height: 5px; }
.idtools .sep { width: 7px; height: 12px; }
.box { flex: 1; min-height: 0; background: #fff; border: 1px solid #b5b5b5; overflow: hidden; }
.treebox { display: flex; }
.tree { flex: 1; padding-top: 1px; font-size: 11px; }
.tree li { height: 18px; display: flex; align-items: center; white-space: nowrap; }
.tree svg { width: 16px; height: 16px; margin-right: 6px; }
.tree b { width: 5px; height: 8px; margin: 0 8px 0 6px; background: #555; clip-path: polygon(0 0, 100% 50%, 0 100%); }
.tree .open { width: 8px; height: 5px; margin: 0 6px 0 5px; clip-path: polygon(0 0, 100% 0, 50% 100%); }
.tree .leaf { visibility: hidden; }
.tree .sub { padding-left: 16px; }
.tree .sub svg { width: 13px; height: 13px; margin: 0 7px 0 2px; }
.scroll { width: 14px; border-left: 1px solid #b5b5b5; display: flex; flex-direction: column; background: #dedede; }
.scroll button { height: 13px; background: #f6f6f6; }
.scroll button svg { width: 8px; height: 5px; }
.track { flex: 1; border: 1px solid #b5b5b5; border-width: 1px 0; padding-top: 14px; }
.thumb { display: block; height: 48px; background: #fafafa; border: 1px solid #b5b5b5; border-width: 1px 0; }
.hsplit { height: 6px; display: flex; align-items: center; justify-content: center; }
.hsplit::before { content: ""; width: 17px; height: 1px; background: repeating-linear-gradient(90deg, #aaa 0 1px, transparent 1px 3px); }
.layer { display: flex; align-items: center; height: 20px; padding-left: 24px; }
.layer i { width: 14px; height: 2px; background: #fbb4c0; margin: 0 6px; }
.layer span { font-weight: bold; font-size: 11px; text-decoration: underline; text-underline-offset: 2px; }
input[type=checkbox] { appearance: none; width: 13px; height: 13px; background: #fff; border: 1px solid #aaa; display: grid; place-items: center; flex: none; }
input[type=checkbox]:checked::before { content: ""; width: 9px; height: 9px; background: #000; clip-path: polygon(0 45%, 20% 38%, 38% 65%, 82% 0, 100% 4%, 45% 100%, 30% 100%); }

table { width: 100%; border-collapse: collapse; table-layout: fixed; }
th { height: 18px; padding: 0 0 0 2px; font-weight: normal; text-align: left; font-size: 12px; background: linear-gradient(#fafafa, #ececec); border-bottom: 1px solid #b5b5b5; }
th:first-child { width: 60%; border-right: 1px solid #c4c4c4; }
.field { display: flex; align-items: center; padding-left: 4px; white-space: nowrap; font-size: 11px; }
.mode { height: 36px; padding-right: 4px; }
.mode label { width: 35px; }
.mode .combo { flex: 1; height: 24px; }
.view { height: 31px; padding-bottom: 5px; color: #999; }
.view label { width: 33px; }
.view .combo { width: 73px; height: 22px; }
.combo { display: grid; align-items: stretch; background: linear-gradient(#fdfdfd, #ececec); border: 1px solid #aaa; border-radius: 3px; }
.combo select { grid-area: 1 / 1; appearance: none; padding-left: 4px; opacity: 1; min-width: 0; }
.combo svg { grid-area: 1 / 1; place-self: center end; width: 8px; height: 5px; margin-right: 7px; pointer-events: none; }
.combo select:disabled + svg { opacity: .5; }

footer { height: 27px; background: #f0f0f0; display: flex; align-items: center; padding-left: 4px; }
.find { width: 200px; height: 22px; display: flex; align-items: center; background: #fff; border: 1px solid #aaa; border-radius: 3px; padding-left: 8px; gap: 7px; }
.find svg { width: 13px; height: 13px; }
.find input { flex: 1; min-width: 0; font-size: 12px; outline: 0; }
.find input::placeholder { color: #777; opacity: 1; }
.status { flex: 1; display: flex; align-items: center; justify-content: flex-end; font: 10px/20px "Liberation Sans", "Noto Sans CJK JP", sans-serif; color: #000; }
.status > label:not(.render) { width: 26px; flex: none; }
.status .coord { width: 98px; height: 22px; background: #fff; border: 1px solid #aaa; border-radius: 3px; padding-left: 5px; }
.ico { width: 24px; height: 22px; margin-right: 8px; }
.ico svg { width: 16px; height: 16px; }
.scale { width: 78px; height: 22px; background: linear-gradient(90deg, #fff 57px, #aaa 57px 58px, #f4f4f4 58px); margin-right: 6px; }
.scale + .ico { margin-right: 4px; }
.spin { width: 82px; height: 22px; display: flex; background: #fff; border: 1px solid #aaa; border-radius: 3px; overflow: hidden; }
.spin input { flex: 1; min-width: 0; padding-left: 3px; }
.spin > span { width: 14px; background: #f4f4f4; border-left: 1px solid #aaa; display: flex; flex-direction: column; }
.spin button { flex: 1; }
.spin svg { width: 7px; height: 4px; }
.status > label.rot:not(.render) { width: 32px; margin-left: 9px; }
.render { display: flex; align-items: center; gap: 5px; margin-left: 7px; width: 51px; white-space: nowrap; flex: none; }
.crs { margin-left: 9px; gap: 1px; }
.crs svg { width: 15px; height: 15px; }
.msg { margin: 0 16px 0 19px; }
.msg svg { width: 18px; height: 18px; }
.size { width: 10px; height: 12px; align-self: flex-end; clip-path: polygon(100% 0, 100% 100%, 0 100%); background: radial-gradient(circle at 1px 1px, #999 0, #999 1px, transparent 1px) 0 0 / 3px 3px; }
```
